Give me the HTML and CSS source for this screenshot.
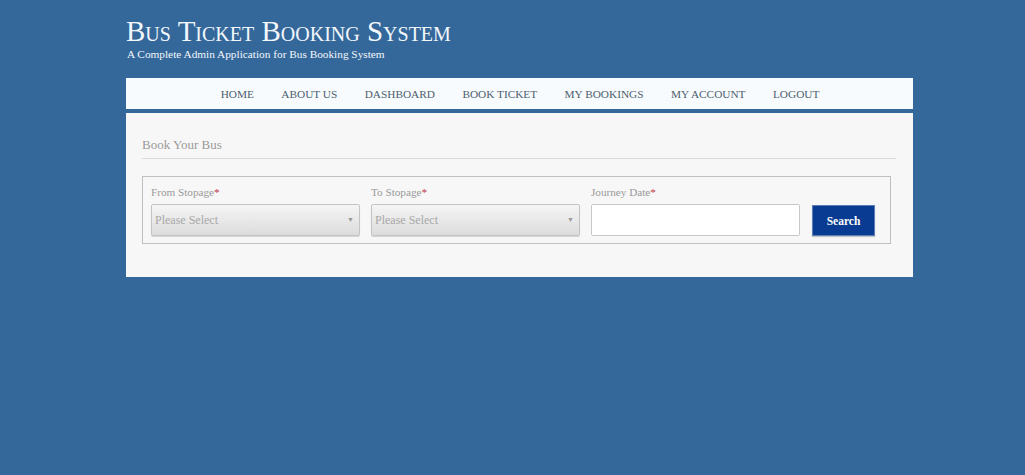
FILE: index.html
```html
<!DOCTYPE html>
<html>
<head>
<meta charset="utf-8">
<link rel="stylesheet" href="styles.css">
</head>
<body>
<div class="wrap">
  <header class="brand">
    <h1 class="title">Bus Ticket Booking System</h1>
    <p class="tagline">A Complete Admin Application for Bus Booking System</p>
  </header>
  <nav class="nav">
    <a href="#">HOME</a>
    <a href="#">ABOUT US</a>
    <a href="#">DASHBOARD</a>
    <a href="#">BOOK TICKET</a>
    <a href="#">MY BOOKINGS</a>
    <a href="#">MY ACCOUNT</a>
    <a href="#">LOGOUT</a>
  </nav>
  <main class="panel">
    <h2 class="panel-title">Book Your Bus</h2>
    <form class="search-box">
      <div class="field">
        <label>From Stopage<span class="req">*</span></label>
        <div class="select"><span>Please Select</span><span class="arrow">&#9660;</span></div>
      </div>
      <div class="field">
        <label>To Stopage<span class="req">*</span></label>
        <div class="select"><span>Please Select</span><span class="arrow">&#9660;</span></div>
      </div>
      <div class="field">
        <label>Journey Date<span class="req">*</span></label>
        <div class="input"></div>
      </div>
      <div class="field btn-field">
        <button type="button" class="btn">Search</button>
      </div>
    </form>
  </main>
</div>
</body>
</html>
```
FILE: styles.css
```css
html, body {
  margin: 0;
  padding: 0;
}
body {
  background: #35689a;
  font-family: "Liberation Serif", "Times New Roman", serif;
  height: 475px;
  overflow: hidden;
}
.wrap {
  width: 787px;
  margin-left: 126px;
}
.brand {
  padding-top: 15px;
  height: 78px;
  box-sizing: border-box;
  color: #f2f7fc;
}
.title {
  margin: 0;
  font-size: 29px;
  font-weight: normal;
  font-variant: small-caps;
  line-height: 32px;
}
.tagline {
  margin: 0;
  font-size: 11.3px;
  line-height: 14px;
  padding-left: 1px;
}
.nav {
  height: 31px;
  background: #f7fbfd;
  display: flex;
  justify-content: center;
  align-items: center;
  gap: 27.4px;
  padding-left: 1px;
}
.nav a {
  color: #4d5e6e;
  text-decoration: none;
  font-size: 11.3px;
}
.panel {
  margin-top: 4px;
  height: 164px;
  box-sizing: border-box;
  background: #f7f7f7;
  padding: 23px 17px 0 16px;
}
.panel-title {
  margin: 0;
  font-size: 13px;
  font-weight: normal;
  color: #9a9a9a;
  line-height: 18px;
  padding-bottom: 4px;
  border-bottom: 1px solid #d9d9d9;
}
.search-box {
  margin: 17px 5px 0 0;
  border: 1px solid #bfbfbf;
  height: 68px;
  box-sizing: border-box;
  padding: 8px 0 0 8px;
  display: flex;
  gap: 11px;
}
.field {
  width: 209px;
  display: flex;
  flex-direction: column;
}
.field label {
  font-size: 11.2px;
  color: #9a9a9a;
  line-height: 14px;
  height: 19px;
}
.req {
  color: #c0394a;
}
.select {
  height: 32px;
  box-sizing: border-box;
  border: 1px solid #c4c4c4;
  border-radius: 2px;
  background: linear-gradient(#f5f5f5, #dcdcdc);
  box-shadow: 0 1px 1px rgba(0,0,0,0.15);
  display: flex;
  align-items: center;
  justify-content: space-between;
  padding: 0 5px 0 3px;
  font-size: 12px;
  color: #a8a8a8;
}
.arrow {
  font-size: 7px;
  color: #999;
}
.input {
  height: 32px;
  box-sizing: border-box;
  border: 1px solid #c8c8c8;
  border-radius: 2px;
  background: #fff;
}
.btn-field {
  width: auto;
  padding-left: 1px;
  padding-top: 20px;
}
.btn {
  width: 63px;
  height: 31px;
  background: #0a3b92;
  color: #fff;
  border: 1px solid #5f7fb8;
  font-family: "Liberation Serif", "Times New Roman", serif;
  font-weight: bold;
  font-size: 11.5px;
  padding: 0;
  box-shadow: 0 1px 1px rgba(0,0,0,0.2);
}
```
